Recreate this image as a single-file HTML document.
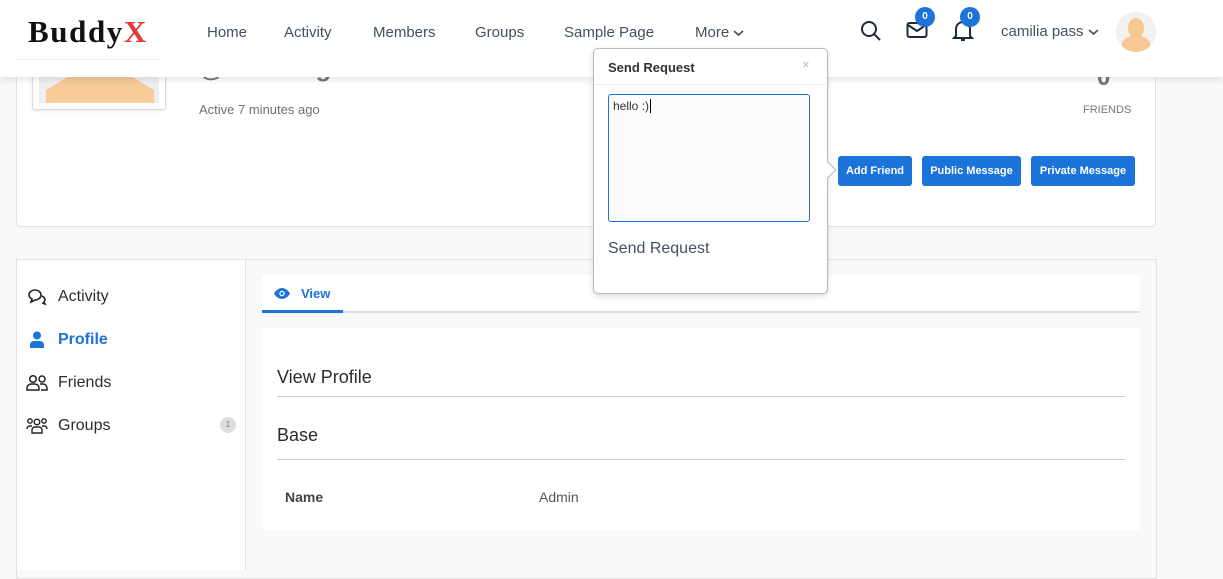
<!DOCTYPE html>
<html><head><meta charset="utf-8"><style>
*{box-sizing:border-box;margin:0;padding:0}
body{width:1223px;height:563px;overflow:hidden;background:#f8f9fb;font-family:"Liberation Sans",sans-serif;position:relative;color:#333}
.abs{position:absolute}
header{position:absolute;left:0;top:0;width:1223px;height:77px;background:#fff;box-shadow:0 2px 8px rgba(0,0,0,.12);z-index:5}
.nav{position:absolute;top:24px;font-size:15px;color:#44505e}
.badge{position:absolute;width:20px;height:20px;border-radius:50%;background:#1c73d9;color:#fff;font-size:10px;font-weight:bold;text-align:center;line-height:20px}
.btn{position:absolute;top:156px;height:30px;background:#1c73d9;color:#fff;font-size:11px;font-weight:bold;border-radius:3px;text-align:center;line-height:30px}
.side{position:absolute;left:58px;font-size:16px;color:#2c2c2c}
</style></head><body>
<header>
 <div class="abs" style="left:28px;top:14px;font-family:'Liberation Serif',serif;font-weight:bold;font-size:31px;color:#111;letter-spacing:1.6px">Buddy<span style="color:#e03a3a">X</span></div>
 <div class="abs" style="left:16px;top:59px;width:145px;height:1px;background:#eee"></div>
 <div class="nav" style="left:207px">Home</div>
 <div class="nav" style="left:284px">Activity</div>
 <div class="nav" style="left:373px">Members</div>
 <div class="nav" style="left:475px">Groups</div>
 <div class="nav" style="left:564px">Sample Page</div>
 <div class="nav" style="left:695px">More <svg width="11" height="8" viewBox="0 0 11 8"><path d="M1 2l4.5 4L10 2" stroke="#44505e" stroke-width="1.6" fill="none"/></svg></div>
 <svg class="abs" style="left:860px;top:20px" width="22" height="22" viewBox="0 0 22 22"><circle cx="9" cy="9" r="7" stroke="#1e2a38" stroke-width="2" fill="none"/><path d="M14 14l6 6" stroke="#1e2a38" stroke-width="2"/></svg>
 <svg class="abs" style="left:906px;top:21px" width="22" height="18" viewBox="0 0 22 18"><rect x="1.5" y="2" width="19" height="14" rx="2" stroke="#1e2a38" stroke-width="2" fill="none"/><path d="M2 4l9 6 9-6" stroke="#1e2a38" stroke-width="2" fill="none"/></svg>
 <div class="badge" style="left:915px;top:7px">0</div>
 <svg class="abs" style="left:952px;top:19px" width="22" height="24" viewBox="0 0 22 24"><path d="M4 17V10a7 7 0 0 1 14 0v7l2 2H2z" stroke="#1e2a38" stroke-width="2" fill="none"/><path d="M9 21h4" stroke="#1e2a38" stroke-width="2"/></svg>
 <div class="badge" style="left:960px;top:7px">0</div>
 <div class="abs" style="left:1001px;top:23px;font-size:15px;color:#44505e">camilia pass <svg width="11" height="8" viewBox="0 0 11 8"><path d="M1 2l4.5 4L10 2" stroke="#44505e" stroke-width="1.6" fill="none"/></svg></div>
 <div class="abs" style="left:1116px;top:12px;width:40px;height:40px;border-radius:50%;background:#f1f1f1;overflow:hidden">
  <div class="abs" style="left:12px;top:6px;width:16px;height:20px;border-radius:50%;background:#f7c892"></div>
  <div class="abs" style="left:5px;top:24px;width:30px;height:20px;border-radius:12px 12px 0 0;background:#f7c892"></div>
 </div>
</header>
<div class="abs" style="left:16px;top:40px;width:1140px;height:187px;background:#fff;border:1px solid #e3e3e3;border-radius:4px"></div>
<div class="abs" style="left:32px;top:40px;width:134px;height:70px;background:#fff;border:1px solid #ddd;border-radius:3px;box-shadow:0 1px 3px rgba(0,0,0,.1)"><div class="abs" style="left:6px;top:0;width:120px;height:62px;background:#efeff1"></div><div class="abs" style="left:13px;top:36px;width:108px;height:26px;background:#f7cc98;clip-path:polygon(20% 0,80% 0,100% 50%,100% 100%,0 100%,0 50%)"></div></div>
<div class="abs" style="left:199px;top:52px;font-size:26px;font-weight:bold;color:#777">@alehvarga</div>
<div class="abs" style="left:199px;top:102px;font-size:13px;color:#6b7078">Active 7 minutes ago</div>
<div class="abs" style="left:1097px;top:64px;font-size:24px;font-weight:bold;color:#777">0</div>
<div class="abs" style="left:1083px;top:104px;font-size:11px;color:#777">FRIENDS</div>
<div class="btn" style="left:838px;width:74px">Add Friend</div>
<div class="btn" style="left:922px;width:99px">Public Message</div>
<div class="btn" style="left:1031px;width:104px">Private Message</div>
<div class="abs" style="left:16px;top:259px;width:1141px;height:320px;border:1px solid #e3e3e3;background:#f8f9fb"></div>
<div class="abs" style="left:17px;top:260px;width:229px;height:310px;background:#fff;border-right:1px solid #e3e3e3"></div>
<svg class="abs" style="left:27px;top:288px" width="20" height="18" viewBox="0 0 20 18"><path d="M2 7c0-3 3-5 6-5s6 2 6 5-3 5-6 5l-4 2 1-3c-2-1-3-2-3-4z" stroke="#222" stroke-width="1.6" fill="none"/><path d="M15 8c2 1 3 2 3 4l-1 2 1 2-3-1" stroke="#222" stroke-width="1.6" fill="none"/></svg>
<div class="side" style="top:288px">Activity</div>
<svg class="abs" style="left:29px;top:331px" width="16" height="17" viewBox="0 0 16 17"><circle cx="8" cy="4.5" r="4" fill="#1c73d9"/><path d="M1 17v-3a4 4 0 0 1 4-4h6a4 4 0 0 1 4 4v3z" fill="#1c73d9"/></svg>
<div class="side" style="top:331px;color:#1c73d9;font-weight:bold">Profile</div>
<svg class="abs" style="left:26px;top:374px" width="22" height="17" viewBox="0 0 22 17"><circle cx="7" cy="5" r="3.3" stroke="#222" stroke-width="1.5" fill="none"/><circle cx="16" cy="5" r="3" stroke="#222" stroke-width="1.5" fill="none"/><path d="M1 16v-2a4 4 0 0 1 4-4h4a4 4 0 0 1 4 4v2zM14 10h3a4 4 0 0 1 4 4v2h-6" stroke="#222" stroke-width="1.5" fill="none"/></svg>
<div class="side" style="top:374px">Friends</div>
<svg class="abs" style="left:26px;top:417px" width="22" height="17" viewBox="0 0 22 17"><circle cx="11" cy="5" r="2.8" stroke="#222" stroke-width="1.4" fill="none"/><circle cx="4" cy="4" r="2.2" stroke="#222" stroke-width="1.4" fill="none"/><circle cx="18" cy="4" r="2.2" stroke="#222" stroke-width="1.4" fill="none"/><path d="M6 16v-3a3 3 0 0 1 3-3h4a3 3 0 0 1 3 3v3zM1 12a3 3 0 0 1 3-3h2M21 12a3 3 0 0 0-3-3h-2" stroke="#222" stroke-width="1.4" fill="none"/></svg>
<div class="side" style="top:417px">Groups</div>
<div class="abs" style="left:220px;top:417px;width:16px;height:16px;border-radius:50%;background:#ddd;color:#777;font-size:8px;text-align:center;line-height:16px">1</div>
<div class="abs" style="left:262px;top:275px;width:878px;height:38px;background:#fff;border-bottom:2px solid #ddd"></div>
<div class="abs" style="left:262px;top:310px;width:81px;height:3px;background:#1c73d9"></div>
<svg class="abs" style="left:274px;top:288px" width="16" height="11" viewBox="0 0 16 11"><path d="M0 5.5C2 2 5 0 8 0s6 2 8 5.5C14 9 11 11 8 11S2 9 0 5.5z" fill="#1c73d9"/><circle cx="8" cy="5.5" r="2.7" fill="#fff"/><circle cx="8" cy="5.5" r="1.5" fill="#1c73d9"/></svg>
<div class="abs" style="left:301px;top:286px;font-size:13px;font-weight:bold;color:#1c73d9">View</div>
<div class="abs" style="left:262px;top:328px;width:878px;height:202px;background:#fff"></div>
<div class="abs" style="left:277px;top:367px;font-size:18px;color:#2c2c2c">View Profile</div>
<div class="abs" style="left:277px;top:396px;width:848px;height:1px;background:#ccc"></div>
<div class="abs" style="left:277px;top:425px;font-size:18px;color:#2c2c2c">Base</div>
<div class="abs" style="left:277px;top:459px;width:848px;height:1px;background:#ccc"></div>
<div class="abs" style="left:285px;top:489px;font-size:14px;font-weight:bold;color:#444">Name</div>
<div class="abs" style="left:539px;top:489px;font-size:14px;color:#555">Admin</div>
<div class="abs" style="left:593px;top:48px;width:235px;height:246px;background:#fff;border:1px solid #bbb;border-radius:5px;box-shadow:0 2px 6px rgba(0,0,0,.15);z-index:6">
 <div class="abs" style="left:14px;top:11px;font-size:13px;font-weight:bold;color:#333">Send Request</div>
 <div class="abs" style="left:208px;top:8px;font-size:13px;color:#bbb">×</div>
 <div class="abs" style="left:0;top:35px;width:233px;height:1px;background:#eee"></div>
 <div class="abs" style="left:14px;top:45px;width:202px;height:128px;border:1px solid #1c73d9;border-radius:3px;background:#fcfcfc;padding:4px;font-size:12px;color:#333">hello :)<span style="border-left:1px solid #000;margin-left:1px"></span></div>
 <div class="abs" style="left:14px;top:191px;font-size:16px;color:#44505e">Send Request</div>
 <div class="abs" style="left:228px;top:115px;width:12px;height:12px;background:#fff;border-right:1px solid #bbb;border-top:1px solid #bbb;transform:rotate(45deg)"></div>
</div>
</body></html>
